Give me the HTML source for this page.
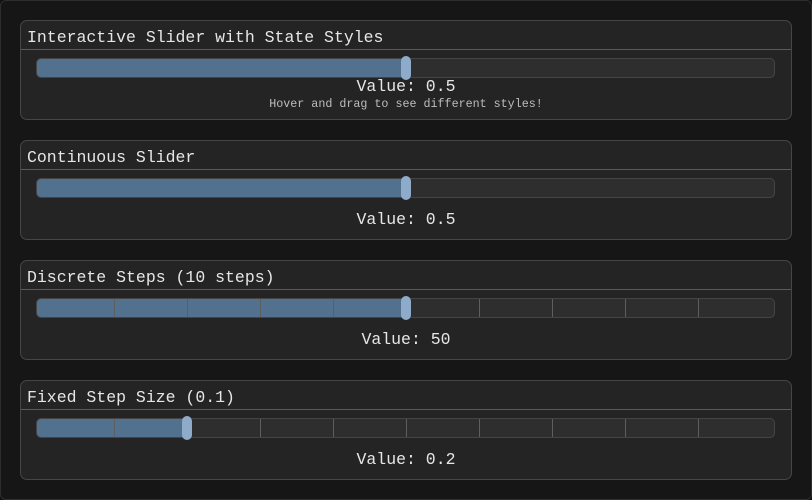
<!DOCTYPE html>
<html><head><style>
html,body{margin:0;padding:0;width:812px;height:500px;background:#121212;overflow:hidden}
.win{position:absolute;left:0;top:0;width:810px;height:498px;border:1px solid #2e2e2e;border-radius:6px;background:#161616}
.p{position:absolute;left:20px;width:770px;height:98px;background:#242424;border:1px solid #464646;border-radius:7px;font-family:"Liberation Mono",monospace;color:#e6e6e6}
.t{position:absolute;left:6px;top:7px;font-size:16.5px;line-height:20px;white-space:pre}
.sep{position:absolute;left:0;right:0;top:28px;height:1px;background:#5a5a5a}
.tr{position:absolute;left:15px;top:37px;width:737px;height:18px;background:#2e2e2e;border:1px solid #444;border-radius:5px;overflow:hidden}
.f{position:absolute;left:0;top:0;bottom:0;background:#52718f}
.tk{position:absolute;top:0;bottom:0;width:1px;background:#5e5e5e}
.th{position:absolute;top:35px;width:10px;height:24px;background:#8eabc9;border-radius:5px}
.v{position:absolute;left:0;right:0;text-align:center;font-size:16.5px;line-height:20px;top:56px;white-space:pre}
.h{position:absolute;left:0;right:0;text-align:center;font-size:11.7px;top:76px;color:#bdbdbd;white-space:pre}
</style></head><body>
<div class="win"></div>
<div class="p" style="top:20px">
<div class="t">Interactive Slider with State Styles</div><div class="sep"></div>
<div class="tr"><div class="f" style="width:370px"></div></div>
<div class="th" style="left:380px"></div>
<div class="v">Value: 0.5</div>
<div class="h">Hover and drag to see different styles!</div>
</div>
<div class="p" style="top:140px">
<div class="t">Continuous Slider</div><div class="sep"></div>
<div class="tr"><div class="f" style="width:370px"></div></div>
<div class="th" style="left:380px"></div>
<div class="v" style="top:69px">Value: 0.5</div>
</div>
<div class="p" style="top:260px">
<div class="t">Discrete Steps (10 steps)</div><div class="sep"></div>
<div class="tr"><div class="f" style="width:370px"></div>
<div class="tk" style="left:77px"></div><div class="tk" style="left:150px"></div><div class="tk" style="left:223px"></div><div class="tk" style="left:296px"></div><div class="tk" style="left:442px"></div><div class="tk" style="left:515px"></div><div class="tk" style="left:588px"></div><div class="tk" style="left:661px"></div></div>
<div class="th" style="left:380px"></div>
<div class="v" style="top:69px">Value: 50</div>
</div>
<div class="p" style="top:380px">
<div class="t">Fixed Step Size (0.1)</div><div class="sep"></div>
<div class="tr"><div class="f" style="width:150px"></div>
<div class="tk" style="left:77px"></div><div class="tk" style="left:223px"></div><div class="tk" style="left:296px"></div><div class="tk" style="left:369px"></div><div class="tk" style="left:442px"></div><div class="tk" style="left:515px"></div><div class="tk" style="left:588px"></div><div class="tk" style="left:661px"></div></div>
<div class="th" style="left:161px"></div>
<div class="v" style="top:69px">Value: 0.2</div>
</div>
</body></html>
